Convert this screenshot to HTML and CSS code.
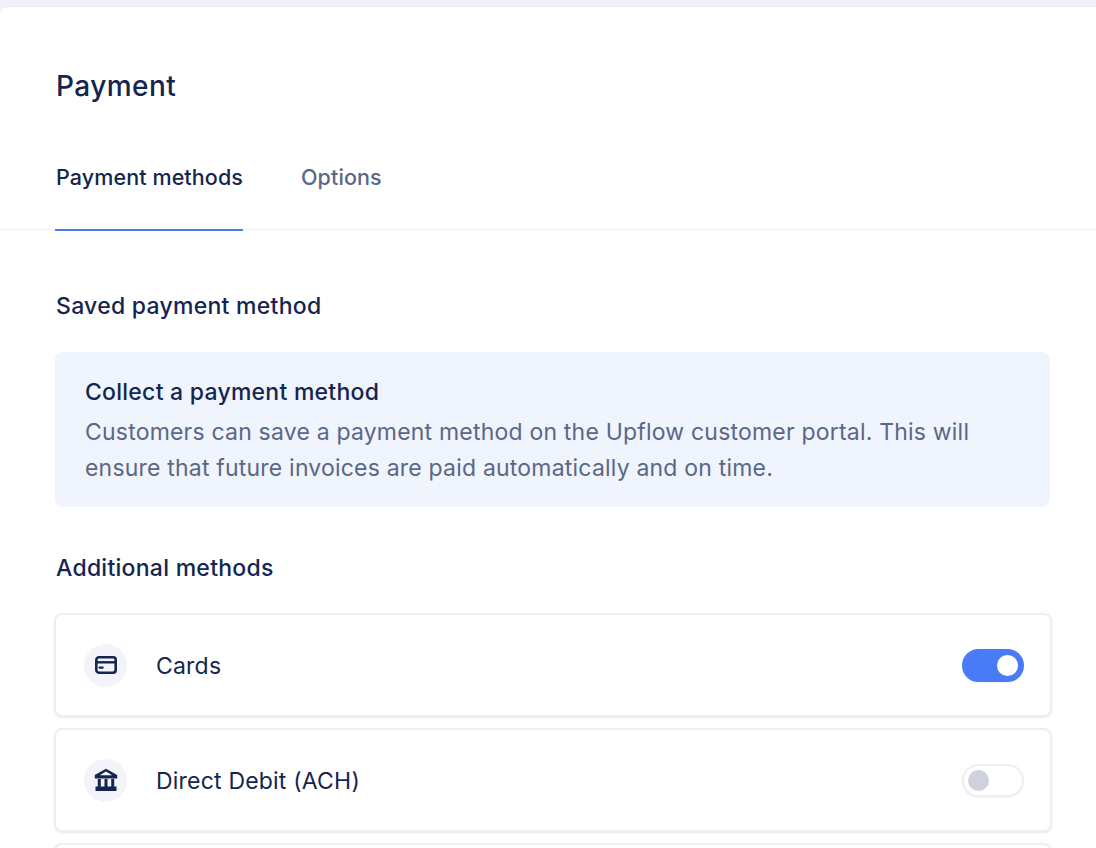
FILE: index.html
```html
<!DOCTYPE html>
<html lang="en">
<head>
<meta charset="utf-8">
<title>Payment</title>
<link rel="stylesheet" href="styles.css">
</head>
<body>
<main class="panel">
  <h1 class="title">Payment</h1>
  <nav class="tabs">
    <a class="tab tab-active">Payment methods</a>
    <a class="tab">Options</a>
  </nav>
  <section class="content">
    <h2 class="heading">Saved payment method</h2>
    <div class="notice">
      <div class="notice-title">Collect a payment method</div>
      <p class="notice-text">Customers can save a payment method on the Upflow customer portal. This will ensure that future invoices are paid automatically and on time.</p>
    </div>
    <h2 class="heading heading-additional">Additional methods</h2>
    <div class="methods">
      <div class="method">
        <span class="method-icon">
          <svg width="24" height="24" viewBox="0 0 24 24" fill="none" stroke="#14264f" stroke-width="2.6"><rect x="2.3" y="4.3" width="19.4" height="15.4" rx="2.6"/><path d="M2 9.3h20" stroke-width="2.4"/><path d="M5.5 14.6h3.2" stroke-width="2.2" stroke-linecap="round"/></svg>
        </span>
        <span class="method-name">Cards</span>
        <span class="toggle toggle-on"><span class="knob"></span></span>
      </div>
      <div class="method">
        <span class="method-icon">
          <svg width="24" height="24" viewBox="0 0 24 24" fill="#14264f"><path d="M12 .8.8 7v3.4h22.4V7L12 .8Zm0 2.7 6.2 3.8H5.8L12 3.5Z"/><path d="M3.8 11h3v7.5h-3zM10.5 11h3v7.5h-3zM17.2 11h3v7.5h-3zM1.5 18.5h21V23h-21z"/></svg>
        </span>
        <span class="method-name">Direct Debit (ACH)</span>
        <span class="toggle"><span class="knob"></span></span>
      </div>
      <div class="method"></div>
    </div>
  </section>
</main>
</body>
</html>
```

FILE: styles.css
```css
html, body {
  margin: 0;
  height: 848px;
  overflow: hidden;
  background: #f1f2f7;
}

body {
  padding-top: 6px;
  box-sizing: border-box;
  font-family: Inter, "Liberation Sans", sans-serif;
  color: #14264f;
}

.panel {
  height: 842px;
  overflow: hidden;
  background: #fff;
  border-top: 1px solid #e9eaf0;
  border-top-left-radius: 8px;
  box-sizing: border-box;
}

.title {
  margin: 0;
  padding: 60px 56px 0;
  font-size: 28px;
  line-height: 38px;
  font-weight: 500;
  letter-spacing: 0.45px;
}

.tabs {
  display: flex;
  gap: 57px;
  margin-top: 58px;
  padding: 0 55px;
  border-bottom: 1px solid #eef0f4;
  height: 66px;
}

.tab {
  font-size: 21.5px;
  line-height: 28px;
  font-weight: 500;
  padding: 0 0 0 1px;
  height: 66px;
  box-sizing: content-box;
  color: #5a6786;
  letter-spacing: 0.1px;
}

.tab-active {
  color: #14264f;
  border-bottom: 2px solid #4a7bf7;
}

.content {
  padding: 0 46px 0 55px;
}

.heading {
  margin: 61px 0 31px 1px;
  font-size: 23px;
  line-height: 30px;
  font-weight: 500;
  letter-spacing: 0.27px;
}

.heading-additional {
  margin-top: 46px;
  margin-bottom: 30px;
}

.notice {
  background: #f0f4fd;
  border-radius: 8px;
  padding: 25px 30px 21px;
  height: 155px;
  box-sizing: border-box;
}

.notice-title {
  font-size: 23px;
  line-height: 30px;
  font-weight: 500;
  letter-spacing: 0.25px;
}

.notice-text {
  margin: 7px 0 0;
  font-size: 23px;
  line-height: 36px;
  color: #5a6786;
  letter-spacing: 0.2px;
}

.methods {
  display: flex;
  flex-direction: column;
  gap: 11px;
  margin: 0 -2px 0 -1px;
}

.method {
  display: flex;
  align-items: center;
  height: 104px;
  flex: none;
  box-sizing: border-box;
  padding: 0 26px 0 28px;
  background: #fff;
  border: 2px solid #eeeff4;
  border-radius: 8px;
  box-shadow: 0 1px 2px rgba(20, 38, 79, 0.1);
}

.method-icon {
  display: flex;
  align-items: center;
  justify-content: center;
  width: 43px;
  height: 43px;
  border-radius: 50%;
  background: #f2f4f9;
}

.method-name {
  margin-left: 29px;
  padding-top: 2px;
  font-size: 23px;
  letter-spacing: 0.2px;
}

.toggle {
  display: flex;
  align-items: center;
  width: 62px;
  height: 33px;
  margin-left: auto;
  padding: 0 4px;
  box-sizing: border-box;
  border: 2px solid #eeeff4;
  border-radius: 17px;
  background: #fff;
  box-shadow: 0 1px 1px rgba(20, 38, 79, 0.06);
}

.toggle .knob {
  width: 21px;
  height: 21px;
  border-radius: 50%;
  background: #cfd2dd;
}

.toggle-on {
  justify-content: flex-end;
  background: #4a7bf7;
  border-color: #4a7bf7;
}

.toggle-on .knob {
  background: #fff;
}
```
